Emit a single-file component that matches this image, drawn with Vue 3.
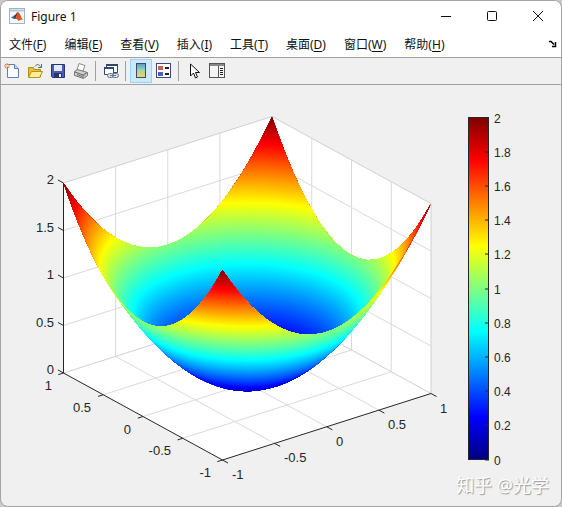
<template>
  <div class="figure-window">
    <header class="title-bar">
      <svg class="app-icon" viewBox="0 0 16 16">
        <rect x="0.5" y="0.5" width="15" height="15" fill="#f4f8fa" stroke="#9fb4c4" />
        <path d="M1 2.5h14" stroke="#b5c7d5" stroke-width="2" />
        <path d="M2 9.5l3-2 1.5 1.5-2 2z" fill="#3b78a8" />
        <path d="M5 7.500C7 7 7.500 4 9 4L7 10.500 5 11z" fill="#5c3a3a" />
        <path d="M9 4c1.500 0 3 5.500 5 8-2-.8-3 .2-4.500 1C8.800 11.500 8 11 6.500 11 8 9 8 5 9 4z" fill="#d9541e" />
      </svg>
      <h1 class="title">Figure 1</h1>
      <div class="window-controls">
        <button type="button" aria-label="最小化">
          <svg viewBox="0 0 12 12"><path d="M1 6.5h10" /></svg>
        </button>
        <button type="button" aria-label="最大化">
          <svg viewBox="0 0 12 12"><rect x="1.5" y="1.5" width="9" height="9" rx="1" /></svg>
        </button>
        <button type="button" aria-label="关闭">
          <svg viewBox="0 0 12 12"><path d="M1 1l10 10M11 1L1 11" /></svg>
        </button>
      </div>
    </header>

    <nav class="menu-bar">
      <button v-for="item in menus" :key="item.key" type="button">{{ item.label }}(<u>{{ item.key }}</u>)</button>
      <button type="button" class="dock" aria-label="停靠">
        <svg viewBox="0 0 8 8">
          <path d="M0 1.500h2l3 3M6.500 2v4.500H3" fill="none" stroke="#000" stroke-width="1.500" />
        </svg>
      </button>
    </nav>

    <div class="tool-bar">
      <button type="button" aria-label="新建图窗">
        <svg viewBox="0 0 16 16">
          <path d="M3.500 1.500h7l4 4v9h-11z" fill="#f7fbff" stroke="#5b7fae" />
          <path d="M10.500 1.500v4h4" fill="#c9dcf1" stroke="#5b7fae" />
          <path d="M3 0v6M0 3h6M1 1l4 4M5 1L1 5" stroke="#d98559" />
          <circle cx="3" cy="3" r="1" fill="#fff2bd" />
        </svg>
      </button>
      <button type="button" aria-label="打开文件">
        <svg viewBox="0 0 16 16">
          <path d="M1.500 14V4.500h5l1 2h6V14z" fill="#e8bf3b" stroke="#b28b14" />
          <path d="M1.500 14.500l3-6h11l-3 6z" fill="#ffee9a" stroke="#b99317" />
          <path d="M8 3.500c2-3 4-2 5.500 0M14.500 1v3.500H11" fill="none" stroke="#52636f" />
        </svg>
      </button>
      <button type="button" aria-label="保存图窗">
        <svg viewBox="0 0 16 16">
          <path d="M1.500 1.500h13v13h-12l-1-1z" fill="#4a5cb5" stroke="#26347d" />
          <rect x="4" y="2" width="8" height="6" fill="#e4e9f8" />
          <rect x="4" y="10" width="8" height="4" fill="#29346a" />
          <rect x="9" y="11" width="2" height="3" fill="#e8edf8" />
        </svg>
      </button>
      <button type="button" aria-label="打印图窗">
        <svg viewBox="0 0 16 16">
          <path d="M4 7l2-6.500 6 2L10 8z" fill="#fff" stroke="#8b8b8b" />
          <path d="M1.500 8.500l3-2 10 3v3l-4 3-9-3z" fill="#cfcfcf" stroke="#777" />
          <path d="M2 9l8 3 4-2.500M10 12v3M4 11.500l5 2" fill="none" stroke="#646464" />
          <path d="M11 13l2-1" stroke="#d6ad37" />
        </svg>
      </button>
      <span class="separator"></span>
      <button type="button" aria-label="链接绘图">
        <svg viewBox="0 0 16 16">
          <path d="M3.500 1.500h11v8h-11z" fill="#fff" stroke="#34466f" />
          <path d="M3 2h12" stroke="#34466f" stroke-width="2" />
          <path d="M1.500 4.500h9v7h-9z" fill="#fff" stroke="#34466f" />
          <path d="M1 5h10" stroke="#34466f" stroke-width="2" />
          <rect x="4.500" y="10.500" width="6" height="4" rx="2" fill="#dae3ed" stroke="#63758e" />
          <rect x="9.500" y="10.500" width="6" height="4" rx="2" fill="#dae3ed" stroke="#63758e" />
          <path d="M7 12.500h6" stroke="#63758e" />
        </svg>
      </button>
      <span class="separator"></span>
      <button type="button" class="active" aria-label="插入颜色栏" aria-pressed="true">
        <svg viewBox="0 0 16 16">
          <defs>
            <linearGradient id="icon-bar" x1="0" y1="0" x2="0" y2="1">
              <stop offset="0" stop-color="#5599c9" />
              <stop offset="0.5" stop-color="#a7d3ad" />
              <stop offset="1" stop-color="#f3d755" />
            </linearGradient>
          </defs>
          <rect x="3.500" y="0.500" width="9" height="14" fill="url(#icon-bar)" stroke="#344d73" />
        </svg>
      </button>
      <button type="button" aria-label="插入图例">
        <svg viewBox="0 0 16 16">
          <rect x="0.500" y="0.500" width="14" height="14" fill="#fff" stroke="#344d80" />
          <rect x="2" y="3" width="5" height="4" fill="#d2604f" />
          <rect x="2" y="9" width="5" height="4" fill="#4a5fc5" />
          <path d="M9 5h4M9 11h4" stroke="#222" stroke-width="2" />
        </svg>
      </button>
      <span class="separator"></span>
      <button type="button" aria-label="编辑绘图">
        <svg viewBox="0 0 16 16">
          <path d="M4.500 1v12l3-3 2 5 2-1-2-4.500h4z" fill="#fff" stroke="#111" />
        </svg>
      </button>
      <button type="button" aria-label="打开属性检查器">
        <svg viewBox="0 0 16 16">
          <rect x="0.500" y="0.500" width="15" height="14" fill="#f5f5f5" stroke="#555" />
          <path d="M1 2h14" stroke="#888" stroke-width="2" />
          <path d="M9.500 3v11" stroke="#555" />
          <path d="M11 5.500h3M11 7.500h3M11 9.500h3M11 11.500h3" stroke="#222" />
        </svg>
      </button>
    </div>

    <main class="canvas-area">
      <svg class="plot" viewBox="1 85 560 421" role="img" aria-label="z = x² + y²">
        <defs>
          <clipPath id="inner-clip"><polygon :points="innerOutline" /></clipPath>
          <clipPath id="outer-clip"><polygon :points="outerOutline" /></clipPath>
          <linearGradient id="jet" x1="0" y1="1" x2="0" y2="0">
            <stop v-for="s in jetStops" :key="s" :offset="s" :stop-color="jet(s)" />
          </linearGradient>
        </defs>

        <polygon v-for="(wall, i) in walls" :key="i" :points="wall" fill="#fff" />
        <path :d="gridPath" class="grid" />
        <path :d="edgePath" class="edge" />
        <path :d="axisPath" class="axis" />

        <!-- 碗的内壁：由高到低 -->
        <g clip-path="url(#inner-clip)">
          <circle
            v-for="l in levelsDown" :key="l.z" :r="l.r" :transform="l.matrix"
            :fill="l.color" :stroke="l.color" class="level"
          />
        </g>
        <!-- 碗的外壁：由低到高 -->
        <g clip-path="url(#outer-clip)">
          <circle
            v-for="l in levels" :key="l.z" :r="l.r" :transform="l.matrix"
            :fill="l.color" :stroke="l.color" class="level"
          />
        </g>

        <g class="tick-labels">
          <text
            v-for="(t, i) in tickLabels" :key="i"
            :x="t.x" :y="t.y" :text-anchor="t.anchor"
          >{{ t.text }}</text>
        </g>

        <rect x="468.5" y="117.5" width="20" height="342" fill="url(#jet)" stroke="#262626" />
        <g v-for="t in barTicks" :key="t.text" class="bar-labels">
          <path :d="`M485 ${t.y}h4`" class="axis" />
          <text x="494" :y="t.y + 5">{{ t.text }}</text>
        </g>
      </svg>
      <span class="watermark">知乎 @光学</span>
    </main>
  </div>
</template>

<script setup>
const menus = [
  { label: '文件', key: 'F' },
  { label: '编辑', key: 'E' },
  { label: '查看', key: 'V' },
  { label: '插入', key: 'I' },
  { label: '工具', key: 'T' },
  { label: '桌面', key: 'D' },
  { label: '窗口', key: 'W' },
  { label: '帮助', key: 'H' }
]

// 正交投影：原点和三个轴的单位向量
const O = [247.25, 383.25]
const X = [104.25, -33.25]
const Y = [-79.5, -43.5]
const Z = -95

const project = (x, y, z) => [
  O[0] + x * X[0] + y * Y[0],
  O[1] + x * X[1] + y * Y[1] + z * Z
]
const pt = (x, y, z) => project(x, y, z).map(v => v.toFixed(2)).join(',')
const seg = (a, b) => `M${pt(...a)}L${pt(...b)}`

// jet 颜色表
const channel = (t, center) => {
  const v = Math.max(0, Math.min(1, 1.5 - Math.abs(4 * t - center)))
  return Math.round(v * 255)
}
const jet = t => `rgb(${channel(t, 3)}, ${channel(t, 2)}, ${channel(t, 1)})`
const jetStops = [0, 0.125, 0.375, 0.625, 0.875, 1]

// 等高线圆
const COUNT = 240
const levels = Array.from({ length: COUNT }, (_, i) => {
  const z = (2 * (i + 1)) / COUNT
  return {
    z,
    r: Math.sqrt(z),
    color: jet(z / 2),
    matrix: `matrix(${X[0]} ${X[1]} ${Y[0]} ${Y[1]} ${O[0]} ${O[1] + z * Z})`
  }
})
const levelsDown = [...levels].reverse()

// 把平面多边形的边细分后贴到 z = x² + y² 上
const outline = corners => corners.flatMap(([x0, y0], i) => {
  const [x1, y1] = corners[(i + 1) % corners.length]
  return Array.from({ length: 60 }, (_, k) => {
    const x = x0 + ((x1 - x0) * k) / 60
    const y = y0 + ((y1 - y0) * k) / 60
    return pt(x, y, x * x + y * y)
  })
}).join(' ')

// 轮廓线 x + a·y = c 把曲面分成内壁和外壁
const a = -X[0] / Y[0]
const c = (X[1] + a * Y[1]) / -Z / 2
const cutRight = [c + a, -1]
const cutLeft = [-1, (c + 1) / a]
const outerOutline = outline([[-1, -1], cutRight, cutLeft])
const innerOutline = outline([cutRight, [1, -1], [1, 1], [-1, 1], cutLeft])

const walls = [
  [[-1, 1, 0], [1, 1, 0], [1, 1, 2], [-1, 1, 2]],
  [[1, 1, 0], [1, -1, 0], [1, -1, 2], [1, 1, 2]],
  [[-1, -1, 0], [1, -1, 0], [1, 1, 0], [-1, 1, 0]]
].map(w => w.map(p => pt(...p)).join(' '))

const gridPath = [-0.5, 0, 0.5].map(v => [
  seg([v, 1, 0], [v, 1, 2]),
  seg([1, v, 0], [1, v, 2]),
  seg([v, -1, 0], [v, 1, 0]),
  seg([-1, v, 0], [1, v, 0]),
  seg([-1, 1, v + 1], [1, 1, v + 1]),
  seg([1, 1, v + 1], [1, -1, v + 1])
].join('')).join('')

const edgePath = [
  seg([-1, 1, 2], [1, 1, 2]),
  seg([1, 1, 2], [1, -1, 2]),
  seg([1, -1, 2], [1, -1, 0]),
  seg([-1, 1, 0], [1, 1, 0]),
  seg([1, 1, 0], [1, -1, 0]),
  seg([1, 1, 0], [1, 1, 2])
].join('')

const ticks = [-1, -0.5, 0, 0.5, 1]
const axisPath = [
  seg([-1, 1, 2], [-1, 1, 0]),
  seg([-1, 1, 0], [-1, -1, 0]),
  seg([-1, -1, 0], [1, -1, 0]),
  ...ticks.flatMap(v => [
    seg([v, -1, 0], [v, -1.07, 0]),
    seg([-1, v, 0], [-1.05, v, 0]),
    seg([-1, 1, v + 1], [-1, 1.07, v + 1])
  ])
].join('')

const label = (point, dx, dy, anchor, text) => {
  const [x, y] = project(...point)
  return { x: Math.round(x + dx), y: Math.round(y + dy), anchor, text }
}
const tickLabels = ticks.flatMap(v => [
  label([v, -1, 0], 9, 19, 'start', v),
  label([-1, v, 0], -12, 17, 'end', v),
  label([-1, 1, v + 1], -10, 1, 'end', v + 1)
])

const barTicks = Array.from({ length: 11 }, (_, i) => ({
  text: String(i / 5),
  y: Math.round(459.5 - i * 34.2)
}))
</script>

<style>
body {
  margin: 0;
  background: #c9c9c9;
}
</style>

<style scoped>
.figure-window {
  box-sizing: border-box;
  border: 1px solid #a3a3a3;
  border-radius: 8px;
  overflow: hidden;
  background: #f0f0f0;
  color: #111;
  font-family: "Noto Sans", "Noto Sans CJK SC", sans-serif;
  font-size: 12px;
}

button {
  margin: 0;
  padding: 0;
  border: 0;
  background: none;
  color: inherit;
  font: inherit;
}

svg {
  display: block;
}

.title-bar {
  display: flex;
  align-items: center;
  height: 30px;
  padding-left: 8px;
  background: #fff;
}

.app-icon {
  width: 16px;
  height: 16px;
}

.title {
  margin: 0 0 0 6px;
  font-size: 12px;
  font-weight: 400;
}

.window-controls {
  display: flex;
  height: 100%;
  margin-left: auto;
}

.window-controls button {
  display: flex;
  align-items: center;
  justify-content: center;
  width: 46px;
}

.window-controls svg {
  width: 12px;
  height: 12px;
  fill: none;
  stroke: #111;
}

.menu-bar {
  display: flex;
  align-items: center;
  gap: 18px;
  height: 26px;
  padding: 0 4px 0 8px;
  background: #fff;
  border-bottom: 1px solid #a0a0a0;
  white-space: nowrap;
}

.menu-bar u {
  text-underline-offset: 2px;
}

.dock {
  margin-left: auto;
}

.dock svg {
  width: 8px;
  height: 8px;
}

.tool-bar {
  display: flex;
  align-items: center;
  gap: 1px;
  height: 26px;
  border-bottom: 1px solid #a0a0a0;
}

.tool-bar button {
  box-sizing: border-box;
  padding: 3px 2px;
  border: 1px solid transparent;
}

.tool-bar button.active {
  background: #cce8ff;
  border-color: #99d1ff;
}

.tool-bar svg {
  width: 16px;
  height: 16px;
}

.separator {
  width: 1px;
  height: 20px;
  margin: 0 3px 0 2px;
  background: #a0a0a0;
}

.canvas-area {
  position: relative;
}

.plot {
  width: 100%;
  height: auto;
}

.grid {
  fill: none;
  stroke: #dadada;
}

.edge {
  fill: none;
  stroke: #d0d0d0;
}

.axis {
  fill: none;
  stroke: #262626;
}

.level {
  stroke-width: 2px;
  vector-effect: non-scaling-stroke;
}

.tick-labels,
.bar-labels {
  fill: #262626;
  font-family: "Liberation Sans", Arial, sans-serif;
  font-size: 13px;
}

.bar-labels {
  font-size: 12px;
}

.watermark {
  position: absolute;
  right: 12px;
  bottom: 9px;
  color: #fff;
  font-size: 18px;
  line-height: 24px;
  text-shadow: 1px 1px 1px #999;
}
</style>
